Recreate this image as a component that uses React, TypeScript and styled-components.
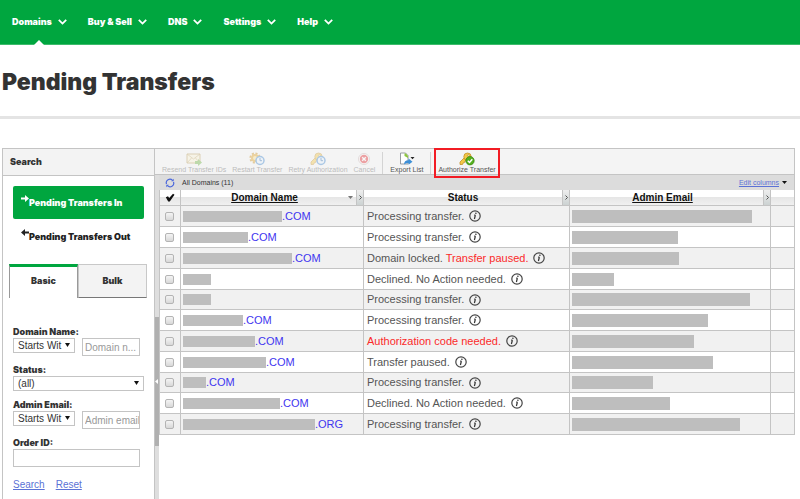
import React from "react";
import styled, { createGlobalStyle } from "styled-components";

const sans = '"Liberation Sans", Arial, sans-serif';
const display = 'Inter, "Open Sans", sans-serif';
const green = "#00a63f";
const line = "#c4c4c4";

const GlobalStyle = createGlobalStyle`
  *, *::before, *::after { box-sizing: border-box; }
  body { margin: 0; background: #fff; color: #333; font-family: ${sans}; }
  button, input, select { font: inherit; color: inherit; margin: 0; }
  button { padding: 0; border: 0; background: none; white-space: nowrap; cursor: pointer; }
  svg { display: block; flex: none; }
`;

const Page = styled.div`
  display: flex;
  flex-direction: column;
  min-height: 100vh;
`;

const TopBar = styled.nav`
  display: flex;
  gap: 21px;
  height: 45px;
  padding: 0 12px;
  background: ${green};
  border-bottom: 1px solid #3dbb6b;
`;

const NavItem = styled.button<{ $active?: boolean }>`
  position: relative;
  display: flex;
  align-items: center;
  gap: 6px;
  color: #fff;
  font: 900 9px/12px ${display};

  &::after {
    content: "";
    display: ${p => (p.$active ? "block" : "none")};
    position: absolute;
    left: 50%;
    bottom: -1px;
    margin-left: -5px;
    border: 5px solid transparent;
    border-top: 0;
    border-bottom-color: #fff;
  }
`;

const TitleBand = styled.header`
  padding: 21px 2px 18px;
  border-bottom: 3px solid #e4e4e4;
`;

const Title = styled.h1`
  margin: 0;
  font: 900 23px/32px ${display};
`;

const Panel = styled.div`
  flex: 1;
  display: flex;
  margin: 29px 5px 0 2px;
`;

const Sidebar = styled.aside`
  flex: none;
  width: 153px;
  border: 1px solid ${line};
  border-bottom: 0;
`;

const SidebarHead = styled.h2`
  margin: 0;
  padding: 0 7px;
  background: #f3f3f3;
  border-bottom: 1px solid ${line};
  font: 900 9px/26px ${display};
`;

const Modes = styled.div`
  display: flex;
  flex-direction: column;
  gap: 1px;
  padding: 10px;
`;

const Mode = styled.button<{ $active?: boolean }>`
  display: flex;
  align-items: center;
  height: 33px;
  padding-left: 8px;
  border-radius: 2px;
  background: ${p => (p.$active ? green : "transparent")};
  color: ${p => (p.$active ? "#fff" : "#222")};
  font: 900 9px/12px ${display};

  svg { margin-bottom: 8px; }
`;

const Tabs = styled.div`
  display: flex;
  margin: 1px 7px 0 6px;
`;

const Tab = styled.button<{ $active?: boolean }>`
  flex: 1;
  height: 34px;
  padding-bottom: ${p => (p.$active ? "3px" : "0")};
  background: ${p => (p.$active ? "#fff" : "#f3f3f3")};
  border: 1px solid ${p => (p.$active ? "#999" : "#c8c8c8")};
  border-top: ${p => (p.$active ? `3px solid ${green}` : "1px solid #c8c8c8")};
  border-bottom: ${p => (p.$active ? "0" : "1px solid #777")};
  font: 900 9px/12px ${display};
`;

const SearchForm = styled.form`
  display: flex;
  flex-direction: column;
  gap: 8px;
  padding: 28px 10px 0;
`;

const Field = styled.div`
  display: flex;
  flex-direction: column;
`;

const FieldLabel = styled.label`
  font: 900 9px/12px ${display};
`;

const Pair = styled.div`
  display: flex;
  align-items: flex-start;
  gap: 7px;
`;

const SelectWrap = styled.div<{ $compact?: boolean }>`
  position: relative;
  flex: ${p => (p.$compact ? "0 0 62px" : "none")};

  svg {
    position: absolute;
    right: 5px;
    top: 5px;
    pointer-events: none;
  }
`;

const Select = styled.select`
  display: block;
  width: 100%;
  height: 15px;
  padding: 0 4px;
  appearance: none;
  background: #fff;
  border: 1px solid ${line};
  border-radius: 0;
  font: 10px/12px ${sans};
`;

const TextBox = styled.input`
  flex: 0 0 18px;
  min-width: 0;
  width: calc(100% - 4px);
  height: 18px;
  padding: 0 1px;
  background: #fff;
  border: 1px solid ${line};
  font: 10px/14px ${sans};

  ${Pair} & { flex: 0 0 58px; padding: 0 0 0 2px; }
  &::placeholder { color: #999; opacity: 1; }
`;

const FormLinks = styled.div`
  display: flex;
  gap: 11px;
  padding: 4px 0 6px;
  font-size: 10px;
  line-height: 12px;
`;

const Link = styled.a`
  color: #5b72d6;
  text-decoration: underline;
`;

const Main = styled.main`
  flex: 1;
  min-width: 0;
  display: flex;
  flex-direction: column;
`;

const Toolbar = styled.div`
  display: flex;
  height: 27px;
  padding-left: 4px;
  background: #f4f4f4;
  border: 1px solid ${line};
  border-left: 0;
`;

const Tool = styled.button<{ $highlight?: boolean }>`
  position: relative;
  display: flex;
  flex-direction: column;
  align-items: center;
  padding: 3px 3px 0;
  font: 7px/8px ${sans};
  color: #555;

  &:disabled { color: #bcbcbc; }
  &:disabled svg { opacity: 0.4; }

  &::after {
    content: "";
    display: ${p => (p.$highlight ? "block" : "none")};
    position: absolute;
    inset: -1px -1px -4px;
    border: 2px solid #f21c24;
  }
`;

const Separator = styled.span`
  width: 1px;
  margin: 3px 4px 0;
  background: #d4d4d4;
`;

const Body = styled.div`
  flex: 1;
  display: flex;
`;

const Splitter = styled.div`
  flex: none;
  display: flex;
  flex-direction: column;
  width: 4px;
  background: #dedede;
`;

const SplitThumb = styled.div`
  display: flex;
  align-items: center;
  height: 129px;
  margin-top: 142px;
  background: #b0b0b0;
`;

const Content = styled.section`
  flex: 1;
  min-width: 0;
`;

const FilterBar = styled.div`
  display: flex;
  align-items: center;
  height: 15px;
  padding: 0 7px 0 6px;
  background: #dcdcdc;
  border-right: 1px solid ${line};
  font-size: 7px;
  line-height: 10px;
`;

const FilterName = styled.span`
  flex: 1;
  padding-left: 7px;
`;

const EditColumns = styled.span`
  display: flex;
  align-items: center;
  gap: 3px;
`;

const Table = styled.table`
  width: 100%;
  table-layout: fixed;
  border-collapse: separate;
  border-spacing: 0;
  border-left: 1px solid ${line};
`;

const Col = styled.col<{ $width?: number }>`
  width: ${p => (p.$width ? `${p.$width}px` : "auto")};
`;

const HeadCell = styled.th`
  height: 16px;
  padding: 0;
  border-right: 1px solid ${line};
  border-bottom: 1px solid ${line};
  background: linear-gradient(#fff 0 45%, #e6e6e6 50%, #f0f0f0);
  font: bold 10px/13px ${sans};
  color: #111;
`;

const HeadInner = styled.div`
  display: flex;
  align-items: center;
  height: 15px;
`;

const HeadLabel = styled.span`
  flex: 1;
  text-align: center;
`;

const CheckSlot = styled.span`
  display: flex;
  flex: 1;
  justify-content: center;
`;

const SortButton = styled.button`
  font: bold 10px/13px ${sans};
  text-decoration: underline;
`;

const SortSlot = styled.span`
  width: 8px;
`;

const Grip = styled.span`
  display: flex;
  align-items: center;
  justify-content: center;
  width: 7px;
  height: 15px;
  background: linear-gradient(#eee, #ccd2d2);
  border-left: 1px solid ${line};
`;

const Row = styled.tr`
  height: 21px;
  background: #fff;

  &:nth-child(odd) { background: #f1f1f1; }
  &:nth-child(4n + 5) { height: 20px; }
`;

const Cell = styled.td`
  padding: 0 0 0 2px;
  border-right: 1px solid ${line};
  border-bottom: 1px solid ${line};
  font-size: 11px;
  line-height: 13px;
  white-space: nowrap;
  color: #555;
`;

const CheckBox = styled.input`
  display: block;
  width: 9px;
  height: 9px;
  margin: 0 0 0 3px;
  appearance: none;
  border: 1px solid #b4b4b4;
  border-radius: 2px;
  background: linear-gradient(#f4f4f4, #d8d8d8);
`;

const Line = styled.div`
  display: flex;
  align-items: center;
`;

const StatusLine = styled(Line)`
  gap: 5px;
  padding-left: 1px;
`;

const Mask = styled.span<{ $width: number; $tall?: boolean }>`
  width: ${p => p.$width}px;
  height: ${p => (p.$tall ? 13 : 11)}px;
  background: #bebebe;
`;

const Domain = styled.a`
  color: #3f35f0;
  text-decoration: none;
`;

const Alert = styled.span`
  color: #fb2a2a;
`;

const Chevron = () => (
  <svg width="9" height="6" viewBox="0 0 9 6" fill="none" stroke="#fff" strokeWidth="1.8">
    <path d="M.8.9l3.7 3.7L8.2.9" />
  </svg>
);

const Arrow = ({ left }: { left?: boolean }) => (
  <svg width="8" height="7" viewBox="0 0 8 7" fill="currentColor">
    <path d={left ? "M0 3.5L4 0v2.4h4v2.2H4V7z" : "M8 3.5L4 0v2.4H0v2.2h4V7z"} />
  </svg>
);

const Caret = ({ color = "#111", w = 5, h = 4 }: { color?: string; w?: number; h?: number }) => (
  <svg width={w} height={h} viewBox="0 0 6 4" preserveAspectRatio="none" fill={color}>
    <path d="M0 0h6L3 4z" />
  </svg>
);

const MailIcon = () => (
  <svg width="16" height="14" viewBox="0 0 16 14">
    <path d="M1 2h13v9H1z" fill="#fbf3d4" stroke="#b99c5a" />
    <path d="M1 2l6.5 5L14 2M1 11l4.5-5M14 11L9.500 6" fill="none" stroke="#b99c5a" strokeWidth=".7" />
    <path d="M9 9h3V7l4 3.500-4 3.500v-2H9z" fill="#6db33f" />
  </svg>
);

const Clock = () => (
  <g>
    <circle cx="11" cy="8.500" r="4" fill="#e4f1fc" stroke="#3f87cf" strokeWidth="1.500" />
    <path d="M11 6v2.700h2" fill="none" stroke="#2d6cb0" />
  </g>
);

const RestartIcon = () => (
  <svg width="16" height="14" viewBox="0 0 16 14">
    <circle cx="6" cy="6" r="4.600" fill="none" stroke="#c98f1c" strokeWidth="2" strokeDasharray="2 1.600" />
    <circle cx="6" cy="6" r="3" fill="#fbe08c" stroke="#e0a020" strokeWidth="2" />
    <Clock />
  </svg>
);

const Key = () => (
  <g fill="#f3c945" stroke="#c4912a" strokeWidth=".8">
    <path d="M5.500 5.500L1 10v2.500h2.500l.5-1.500 1.500-.5.500-1.500L8 8z" />
    <path d="M8.500 1a3.700 3.700 0 0 1 3.700 3.700A3.700 3.700 0 0 1 8.500 8.400 3.700 3.700 0 0 1 4.800 4.700 3.700 3.700 0 0 1 8.500 1z" />
    <circle cx="9.300" cy="3.500" r=".9" fill="#fff" />
  </g>
);

const RetryIcon = () => (
  <svg width="16" height="14" viewBox="0 0 16 14"><Key /><Clock /></svg>
);

const CancelIcon = () => (
  <svg width="14" height="14" viewBox="0 0 14 14">
    <circle cx="7" cy="7" r="5.500" fill="#fff" stroke="#c9b5b5" />
    <circle cx="7" cy="7" r="4.200" fill="#e2262c" />
    <path d="M5.200 5.200l3.600 3.600M8.800 5.200L5.200 8.800" stroke="#fff" strokeWidth="1.400" />
  </svg>
);

const ExportIcon = () => (
  <svg width="16" height="14" viewBox="0 0 16 14">
    <path d="M1.500 1h5L9 3.500V12H1.500z" fill="#fff" stroke="#8c9299" strokeWidth=".9" />
    <path d="M5.500 1.500h1.500L9 4v2L5.500 4z" fill="#8cc63f" />
    <path d="M5 12.500c0-3 2-4.500 4.500-4.300V6.500l4 3.300-4 3v-1.800C7.800 11 6.500 11.500 5 12.500z" fill="#3d8fd6" />
    <path d="M11.500 5h4l-2 2.300z" fill="#222" />
  </svg>
);

const AuthorizeIcon = () => (
  <svg width="16" height="14" viewBox="0 0 16 14">
    <Key />
    <circle cx="11" cy="8.700" r="4.200" fill="#54b01e" stroke="#34840d" strokeWidth=".7" />
    <path d="M8.800 8.800l1.700 1.700 2.800-3.300" fill="none" stroke="#fff" strokeWidth="1.500" />
  </svg>
);

const RefreshIcon = () => (
  <svg width="10" height="10" viewBox="0 0 10 10" fill="none" stroke="#4a67dc" strokeWidth="1.200">
    <path d="M1.500 6A3.600 3.600 0 0 1 7.500 2.300M8.500 4A3.600 3.600 0 0 1 2.500 7.700" />
    <path d="M8.700.7v2.500H6.200zM1.300 9.300V6.800h2.500z" fill="#4a67dc" stroke="none" />
  </svg>
);

const HeaderCheck = () => (
  <svg width="10" height="9" viewBox="0 0 10 9">
    <path d="M.8 4.200L3 3.200 4.200 5 8 .8l1.500.9L4.800 8.500H3.200z" fill="#111" />
  </svg>
);

const GripIcon = () => (
  <svg width="3" height="5" viewBox="0 0 3 5" fill="none" stroke="#444" strokeWidth=".9">
    <path d="M.5.5l2 2-2 2" />
  </svg>
);

const InfoIcon = () => (
  <svg width="12" height="12" viewBox="0 0 12 12">
    <circle cx="6" cy="6" r="5.200" fill="none" stroke="#444" strokeWidth="1.200" />
    <path d="M6.400 5L5.400 9M5.200 5.200h1.200" stroke="#333" strokeWidth="1.200" />
    <circle cx="6.900" cy="3.200" r=".8" fill="#333" />
  </svg>
);

const navItems = ["Domains", "Buy & Sell", "DNS", "Settings", "Help"];

type Transfer = { mask: number; tld?: string; status?: string; alert?: string; email: number };

const transfers: Transfer[] = [
  { mask: 99, tld: ".COM", status: "Processing transfer.", email: 180 },
  { mask: 65, tld: ".COM", status: "Processing transfer.", email: 106 },
  { mask: 109, tld: ".COM", status: "Domain locked.", alert: "Transfer paused.", email: 107 },
  { mask: 28, status: "Declined. No Action needed.", email: 42 },
  { mask: 28, status: "Processing transfer.", email: 178 },
  { mask: 60, tld: ".COM", status: "Processing transfer.", email: 136 },
  { mask: 72, tld: ".COM", alert: "Authorization code needed.", email: 122 },
  { mask: 83, tld: ".COM", status: "Transfer paused.", email: 141 },
  { mask: 23, tld: ".COM", status: "Processing transfer.", email: 81 },
  { mask: 97, tld: ".COM", status: "Declined. No Action needed.", email: 98 },
  { mask: 132, tld: ".ORG", status: "Processing transfer.", email: 168 },
];

export default function App() {
  return (
    <Page>
      <GlobalStyle />
      <TopBar>
        {navItems.map((name, i) => (
          <NavItem key={name} type="button" $active={i === 0}>{name}<Chevron /></NavItem>
        ))}
      </TopBar>
      <TitleBand><Title>Pending Transfers</Title></TitleBand>
      <Panel>
        <Sidebar>
          <SidebarHead>Search</SidebarHead>
          <Modes>
            <Mode type="button" $active><Arrow />Pending Transfers In</Mode>
            <Mode type="button"><Arrow left />Pending Transfers Out</Mode>
          </Modes>
          <Tabs role="tablist">
            <Tab type="button" role="tab" aria-selected $active>Basic</Tab>
            <Tab type="button" role="tab" aria-selected={false}>Bulk</Tab>
          </Tabs>
          <SearchForm>
            <Field>
              <FieldLabel htmlFor="domain">Domain Name:</FieldLabel>
              <Pair>
                <SelectWrap $compact>
                  <Select aria-label="Domain name match"><option>Starts Wit</option></Select>
                  <Caret />
                </SelectWrap>
                <TextBox id="domain" placeholder="Domain n..." />
              </Pair>
            </Field>
            <Field>
              <FieldLabel htmlFor="status">Status:</FieldLabel>
              <SelectWrap>
                <Select id="status"><option>(all)</option></Select>
                <Caret />
              </SelectWrap>
            </Field>
            <Field>
              <FieldLabel htmlFor="email">Admin Email:</FieldLabel>
              <Pair>
                <SelectWrap $compact>
                  <Select aria-label="Admin email match"><option>Starts Wit</option></Select>
                  <Caret />
                </SelectWrap>
                <TextBox id="email" placeholder="Admin email" />
              </Pair>
            </Field>
            <Field>
              <FieldLabel htmlFor="order">Order ID:</FieldLabel>
              <TextBox id="order" />
            </Field>
            <FormLinks>
              <Link href="#search">Search</Link>
              <Link href="#reset">Reset</Link>
            </FormLinks>
          </SearchForm>
        </Sidebar>
        <Main>
          <Toolbar>
            <Tool type="button" disabled><MailIcon />Resend Transfer IDs</Tool>
            <Tool type="button" disabled><RestartIcon />Restart Transfer</Tool>
            <Tool type="button" disabled><RetryIcon />Retry Authorization</Tool>
            <Tool type="button" disabled><CancelIcon />Cancel</Tool>
            <Separator />
            <Tool type="button"><ExportIcon />Export List</Tool>
            <Separator />
            <Tool type="button" $highlight><AuthorizeIcon />Authorize Transfer</Tool>
          </Toolbar>
          <Body>
            <Splitter>
              <SplitThumb>
                <svg width="3" height="5" viewBox="0 0 3 5" fill="#fff"><path d="M3 0v5L0 2.500z" /></svg>
              </SplitThumb>
            </Splitter>
            <Content>
              <FilterBar>
                <RefreshIcon />
                <FilterName>All Domains (11)</FilterName>
                <EditColumns><Link href="#columns">Edit columns</Link><Caret w={5} h={3} /></EditColumns>
              </FilterBar>
              <Table>
                <colgroup>
                  <Col $width={21} /><Col $width={183} /><Col $width={206} /><Col $width={201} /><Col />
                </colgroup>
                <thead>
                  <tr>
                    <HeadCell aria-label="Select"><HeadInner><CheckSlot><HeaderCheck /></CheckSlot></HeadInner></HeadCell>
                    <HeadCell><HeadInner>
                      <HeadLabel><SortButton type="button">Domain Name</SortButton></HeadLabel>
                      <SortSlot><Caret color="#777" w={5} h={3} /></SortSlot><Grip><GripIcon /></Grip>
                    </HeadInner></HeadCell>
                    <HeadCell><HeadInner>
                      <HeadLabel>Status</HeadLabel><Grip><GripIcon /></Grip>
                    </HeadInner></HeadCell>
                    <HeadCell><HeadInner>
                      <HeadLabel><SortButton type="button">Admin Email</SortButton></HeadLabel>
                      <SortSlot /><Grip><GripIcon /></Grip>
                    </HeadInner></HeadCell>
                    <HeadCell />
                  </tr>
                </thead>
                <tbody>
                  {transfers.map((t, i) => (
                    <Row key={i}>
                      <Cell><CheckBox type="checkbox" aria-label={`Select row ${i + 1}`} /></Cell>
                      <Cell><Line><Mask $width={t.mask} />{t.tld && <Domain href="#domain">{t.tld}</Domain>}</Line></Cell>
                      <Cell>
                        <StatusLine>
                          <span>{t.status}{t.status && t.alert && " "}{t.alert && <Alert>{t.alert}</Alert>}</span>
                          <InfoIcon />
                        </StatusLine>
                      </Cell>
                      <Cell><Line><Mask $width={t.email} $tall /></Line></Cell>
                      <Cell />
                    </Row>
                  ))}
                </tbody>
              </Table>
            </Content>
          </Body>
        </Main>
      </Panel>
    </Page>
  );
}
